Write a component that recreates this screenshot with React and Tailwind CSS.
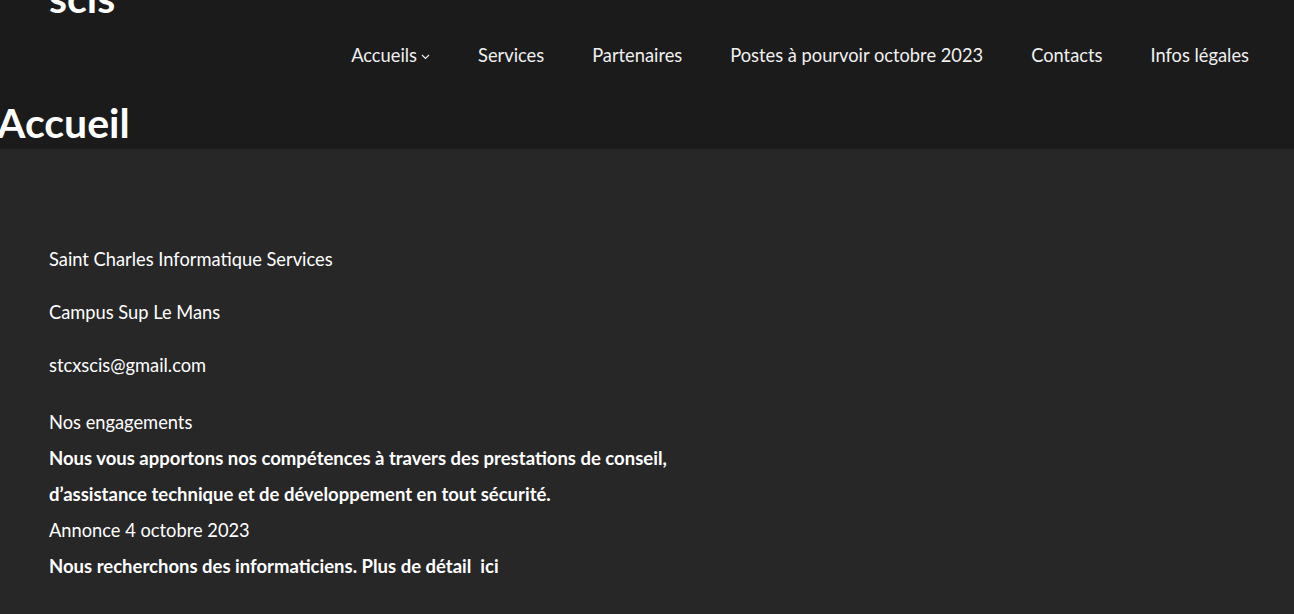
export default function App() {
  const nav = ["Services", "Partenaires", "Postes à pourvoir octobre 2023", "Contacts", "Infos légales"];
  return (
    <div className="min-h-[614px] bg-[#272727] text-white" style={{ fontFamily: "Lato, 'Noto Sans', sans-serif" }}>
      <header className="bg-[#1b1b1b] h-[149px] relative overflow-hidden">
        <div className="pl-[49px] -mt-[25px] text-[41px] font-bold leading-[46px]">scis</div>
        <nav className="flex justify-end gap-[48px] pr-[45px] mt-[21px] text-[18.3px] text-[#f0f0f0]">
          <span className="flex items-center gap-1">Accueils
            <svg width="9" height="6" viewBox="0 0 9 6" className="mt-[3px]"><path d="M1 1l3.5 3.5L8 1" stroke="#f0f0f0" strokeWidth="1.2" fill="none" /></svg>
          </span>
          {nav.map((n) => <span key={n}>{n}</span>)}
        </nav>
        <h1 className="absolute left-[-3px] top-[97px] text-[41px] font-bold leading-[52px]">Accueil</h1>
      </header>
      <main className="px-[49px] pt-[96px] text-[18.3px] pb-8">
        <p className="leading-[28px]">Saint Charles Informatique Services</p>
        <p className="leading-[28px] mt-[25px]">Campus Sup Le Mans</p>
        <p className="leading-[28px] mt-[25px]">stcxscis@gmail.com</p>
        <p className="leading-[36px] mt-[25px]">Nos engagements</p>
        <p className="leading-[36px] font-bold text-[18.5px]">Nous vous apportons nos compétences à travers des prestations de conseil,</p>
        <p className="leading-[36px] font-bold text-[18.5px]">d’assistance technique et de développement en tout sécurité.</p>
        <p className="leading-[36px]">Annonce 4 octobre 2023</p>
        <p className="leading-[36px] font-bold text-[18.5px]">Nous recherchons des informaticiens. Plus de détail&nbsp; ici</p>
      </main>
    </div>
  );
}
